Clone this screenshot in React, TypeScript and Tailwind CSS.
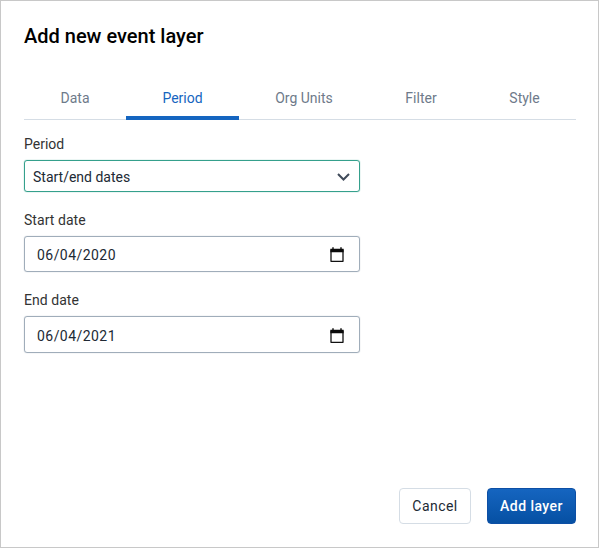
import React from "react";

const tabs = [
  { label: "Data", width: "w-[102px]" },
  { label: "Period", width: "w-[113px]" },
  { label: "Org Units", width: "w-[130px]" },
  { label: "Filter", width: "w-[104px]" },
  { label: "Style", width: "w-[103px]" },
];

function CalendarIcon() {
  return (
    <svg className="mt-0.5" width="14" height="16" viewBox="0 0 14 16" fill="none">
      <path d="M1 3h12v11.3H1z" stroke="#111" strokeWidth="1.3" strokeLinejoin="round" />
      <path d="M0.4 1.8h13.2v3.4H0.4zM2.3 0.3h1.4v2H2.3zM10.3 0.3h1.4v2h-1.4z" fill="#0a0a0a" />
    </svg>
  );
}

function DateField({ label, value, height }: { label: string; value: string; height: string }) {
  return (
    <label className="block">
      <span className="block h-4 text-[14px] leading-4 tracking-[0.05px] text-[#333]">{label}</span>
      <span
        className={`${height} mt-2 flex w-[336px] items-center justify-between rounded-[3px] border border-[#a0adba] pl-3 pr-[15px] text-[14px] text-[#212934] shadow-[0_0_1px_#a0adba]`}
      >
        <span className="pt-[3px] tracking-[0.45px]">{value}</span>
        <CalendarIcon />
      </span>
    </label>
  );
}

export default function App() {
  return (
    <main className="flex h-[548px] w-[599px] flex-col border border-[#c8c8c8] bg-white pb-[23px] pl-[23px] pr-[22px] pt-[23px] font-[Roboto,sans-serif]">
      <h1 className="h-6 text-[20px] font-medium leading-[25px] text-black">Add new event layer</h1>
      <nav className="mt-7 flex h-[44px] border-b border-[#d5dde5]">
        {tabs.map((t) => (
          <button
            key={t.label}
            className={`${t.width} h-[44px] text-[14px] ${t.label === "Period" ? "border-b-4 border-[#1565c0] pt-1 text-[#1565c0]" : "text-[#6e7a8a]"}`}
          >
            {t.label}
          </button>
        ))}
      </nav>
      <section className="mt-4">
        <div className="h-4 text-[14px] leading-4 text-[#333]">Period</div>
        <div className="mt-2 flex h-8 w-[336px] items-center justify-between rounded-[3px] border border-[#35a08c] pl-2 pr-[9px] text-[14px] text-[#212934] shadow-[0_0_1px_#35a08c]">
          <span className="pt-0.5">Start/end dates</span>
          <svg className="mt-px" width="13" height="8" viewBox="0 0 13 8" fill="none">
            <path d="M1 1l5.5 5.5L12 1" stroke="#404b5a" strokeWidth="2" />
          </svg>
        </div>
      </section>
      <section className="mt-5 flex flex-col gap-5">
        <DateField label="Start date" value="06/04/2020" height="h-9" />
        <DateField label="End date" value="06/04/2021" height="h-[37px]" />
      </section>
      <footer className="mt-auto flex justify-end gap-4">
        <button className="h-9 w-[72px] rounded-[4px] border border-[#d5dde5] text-[14px] tracking-[0.45px] text-[#212934]">
          Cancel
        </button>
        <button className="h-9 w-[89px] rounded-[4px] border border-[#0d4fa5] bg-linear-to-b from-[#1565c0] to-[#0650a3] text-[14px] font-medium tracking-[0.45px] text-white">
          Add layer
        </button>
      </footer>
    </main>
  );
}
